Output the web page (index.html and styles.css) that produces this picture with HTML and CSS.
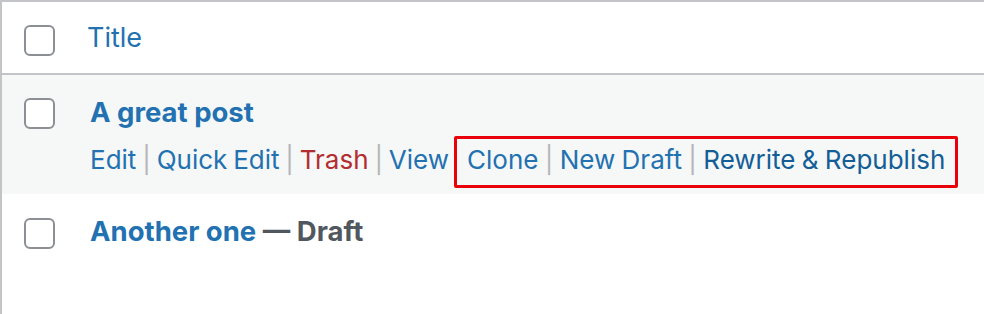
FILE: index.html
```html
<!DOCTYPE html>
<html lang="en">
<head>
<meta charset="utf-8">
<title>Posts</title>
<link rel="stylesheet" href="styles.css">
</head>
<body>
<div class="table">
  <div class="row head">
    <div class="cb-cell"><span class="cb"></span></div>
    <div class="head-label">Title</div>
  </div>
  <div class="row post alt">
    <div class="cb-cell"><span class="cb"></span></div>
    <div class="content">
      <div class="post-title"><a href="#">A great post</a></div>
      <div class="actions"><a href="#">Edit</a><span class="sep"> | </span><a href="#">Quick Edit</a><span class="sep"> | </span><a href="#" class="trash">Trash</a><span class="sep"> | </span><a href="#">View</a><span class="highlight"><a href="#">Clone</a><span class="sep"> | </span><a href="#">New Draft</a><span class="sep"> | </span><a href="#" class="dark">Rewrite &amp; Republish</a></span></div>
    </div>
  </div>
  <div class="row post second">
    <div class="cb-cell"><span class="cb"></span></div>
    <div class="content">
      <div class="post-title"><a href="#">Another one</a><span class="state"> — Draft</span></div>
    </div>
  </div>
</div>
</body>
</html>
```
FILE: styles.css
```css
html, body {
  margin: 0;
  padding: 0;
  background: #fff;
}
body {
  font-family: Inter, "Noto Sans", sans-serif;
  width: 984px;
  height: 314px;
  overflow: hidden;
}
a {
  color: #2271b1;
  text-decoration: none;
}
.table {
  border-top: 2px solid #c3c4c7;
  border-left: 2px solid #c3c4c7;
  height: 312px;
}
.row {
  display: flex;
  align-items: flex-start;
}
.cb-cell {
  padding: 23px 0 0 22px;
  flex: none;
}
.cb {
  display: block;
  width: 31px;
  height: 31px;
  box-sizing: border-box;
  border: 2px solid #8c8f94;
  border-radius: 6px;
  background: #fff;
}
.head {
  height: 71px;
  border-bottom: 2px solid #c3c4c7;
}
.head-label {
  margin-left: 32px;
  padding-top: 20px;
  font-size: 27px;
  line-height: 32px;
  color: #2271b1;
}
.post {
  height: 119px;
}
.alt {
  background: #f6f7f7;
}
.second .cb-cell {
  padding-top: 24px;
}
.content {
  margin-left: 35px;
}
.post-title {
  padding-top: 21px;
  font-size: 27.5px;
  line-height: 32px;
  font-weight: 700;
}
.state {
  color: #50575e;
}
.actions {
  margin-top: 16px;
  font-size: 26px;
  line-height: 32px;
  white-space: nowrap;
  word-spacing: -1.5px;
}
.sep {
  color: #b4b6b9;
}
.trash {
  color: #b32d2e;
}
.dark {
  color: #135e96;
}
.highlight {
  margin-left: 5px;
  padding: 5px 10px 10px;
  border: 3px solid #e8000b;
  border-radius: 2px;
  word-spacing: -1px;
}
```
